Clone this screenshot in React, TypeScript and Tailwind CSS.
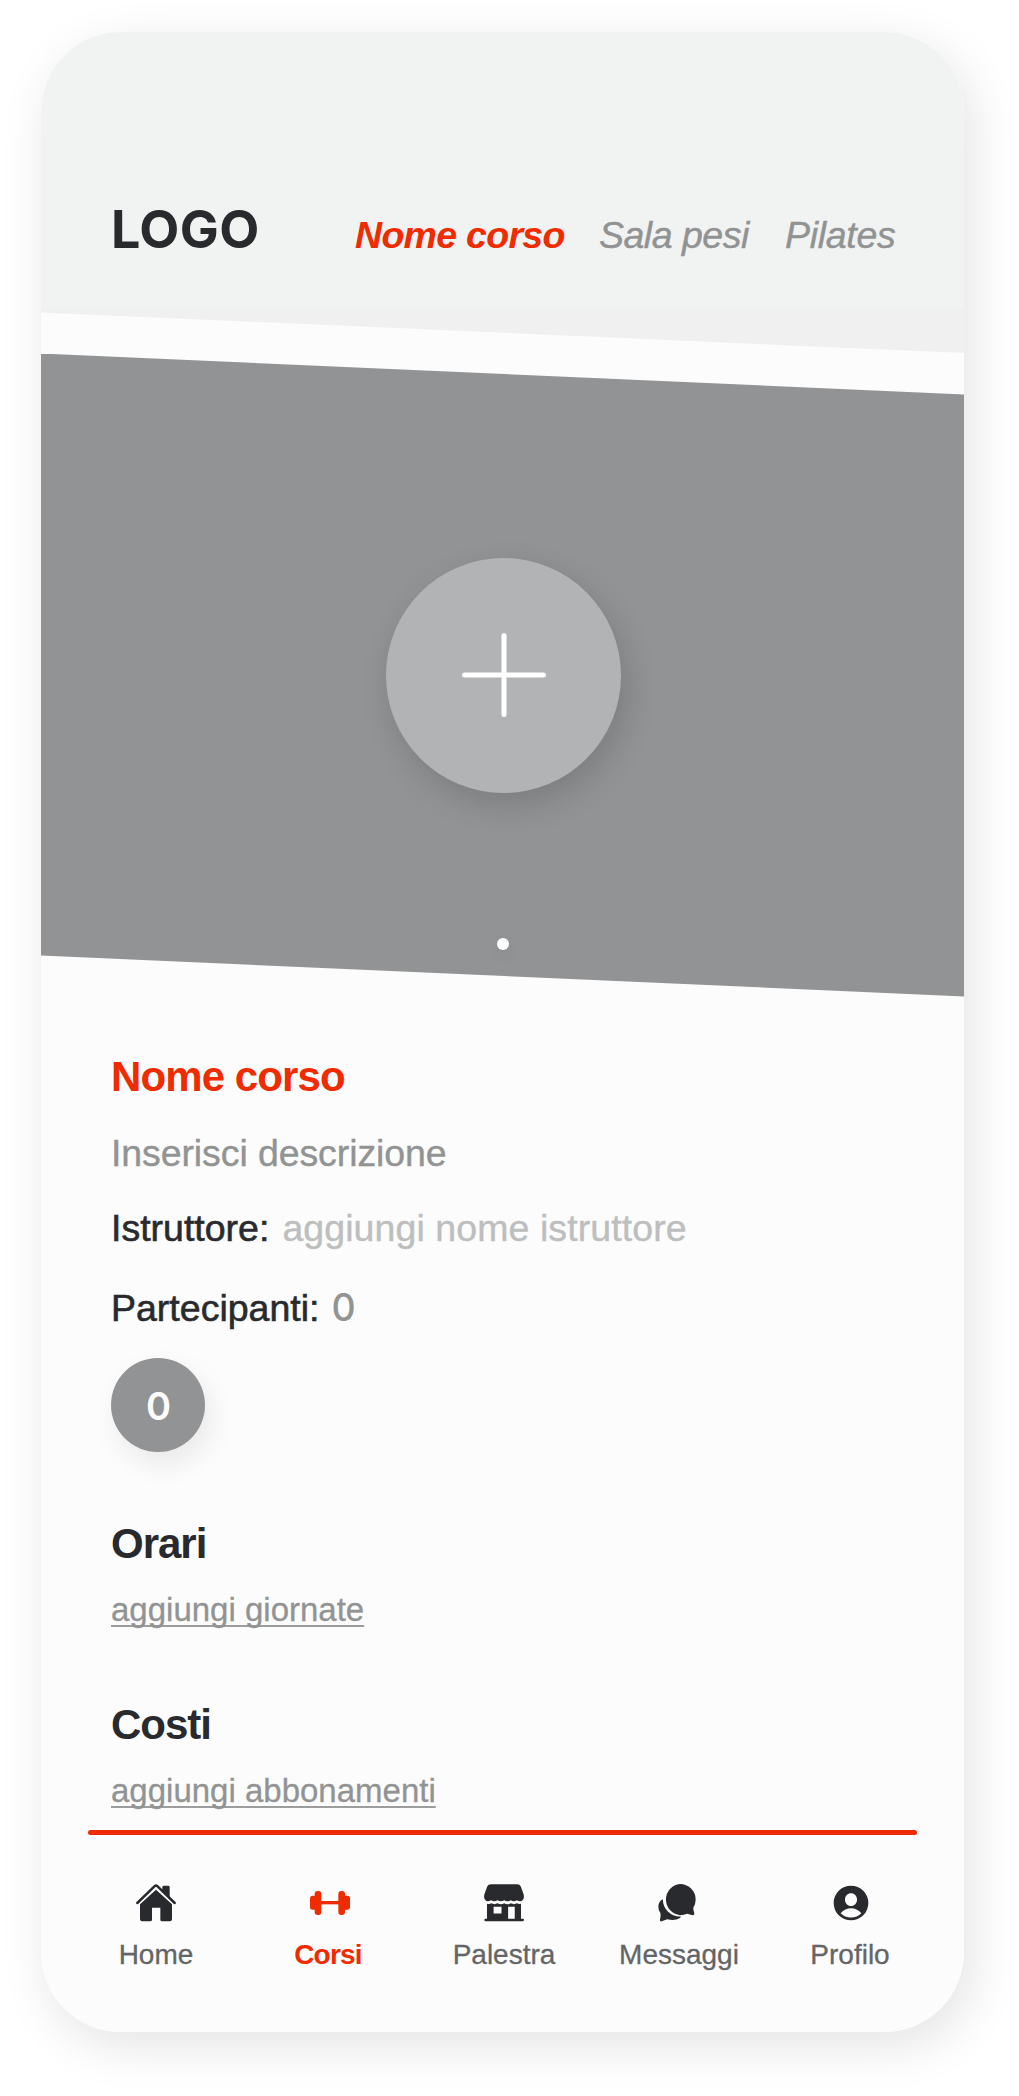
import React from "react";

type IconProps = { className?: string };

function HomeIcon({ className }: IconProps) {
  return (
    <svg viewBox="168 72 120 114" className={className} fill="currentColor">
      <path d="M247 81q0-4 4-4h14q4 0 4 4v32l-22-20z" />
      <path d="M172 129l52-50.500q4-3.500 8 0l52 50.500" fill="none" stroke="currentColor" strokeWidth="7.500" strokeLinecap="round" strokeLinejoin="round" />
      <path d="M228 89l48 44v45q0 6-6 6h-24q-5 0-5-5v-36h-25v36q0 5-5 5h-25q-6 0-6-6v-45z" />
    </svg>
  );
}

function DumbbellIcon({ className }: IconProps) {
  return (
    <svg viewBox="684 72 120 114" className={className} fill="currentColor" overflow="visible">
      <rect x="690" y="107" width="20" height="42" rx="8" />
      <rect x="704" y="93" width="20" height="72" rx="9" />
      <rect x="718" y="123" width="64" height="10" />
      <rect x="775" y="93" width="20" height="72" rx="9" />
      <rect x="790" y="107" width="20" height="42" rx="8" />
    </svg>
  );
}

function StoreIcon({ className }: IconProps) {
  return (
    <svg viewBox="190 72 121 114" className={className} fill="currentColor">
      <path d="M211 72h80q7 0 10 6l9 25q3 14-5 19-8 4-15-1-10 6-19 0-10 6-20 0-10 6-20 0-10 6-20 0-8 5-15 1-8-5-5-19l9-25q3-6 11-6z" />
      <path
        fillRule="evenodd"
        d="M199 131q7 2 13-1 9 5 19 0 10 6 20 0 10 6 20 0 10 5 19 0 6 3 12 1v46h6q3 0 3 3.500t-3 3.500h-114q-3 0-3-3.500t3-3.500h5zM219 140v21h24v-21zM263 140v37h20v-37z"
      />
    </svg>
  );
}

function ChatIcon({ className }: IconProps) {
  return (
    <svg viewBox="717 72 120 114" className={className} fill="currentColor" overflow="visible">
      <path d="M727 118q-12 9-12 22 0 11 6 19 2 5-1 20-1 6 5 5l17-6q22 6 38-4 5-4 1-6z" />
      <circle cx="780" cy="118" r="51.500" fill="#fcfcfc" />
      <path d="M780 72a47 46.500 0 0 1 47 46.500q0 13-7 25-1 4 3 16 1 6-5 6-8-1-17-4-9 4-21 4a47 47 0 0 1 0-93.500z" />
    </svg>
  );
}

function ProfileIcon({ className }: IconProps) {
  return (
    <svg viewBox="270 251 120 114" className={className} fill="currentColor">
      <path
        fillRule="evenodd"
        d="M333 256a52 52 0 1 1 0 104 52 52 0 1 1 0-104zM333 279c-10 0-18 8-18 19s8 19 18 19 18-8 18-19-8-19-18-19zM302 339c17-20 45-20 62 0-14 17-48 17-62 0z"
      />
    </svg>
  );
}

const tabs = [
  { label: "Home", Icon: HomeIcon, width: "w-[136px]", active: false },
  { label: "Corsi", Icon: DumbbellIcon, width: "w-[208px]", active: true },
  { label: "Palestra", Icon: StoreIcon, width: "w-[144px]", active: false },
  { label: "Messaggi", Icon: ChatIcon, width: "w-[206px]", active: false },
  { label: "Profilo", Icon: ProfileIcon, width: "w-[136px]", active: false },
];

function Header() {
  return (
    <header className="h-[321px] bg-[linear-gradient(#f1f3f2_276px,#f0f0f0_276px)] [clip-path:polygon(0_0,100%_0,100%_100%,0_280.500px)]">
      <div className="flex items-baseline pt-[172px] pl-[70px]">
        <div className="w-[244px] shrink-0 font-['Inter'] text-[52px] leading-[52px] font-bold tracking-[0.4px]">LOGO</div>
        <nav className="flex items-baseline text-[37.5px] leading-none whitespace-nowrap italic">
          <a className="w-[244px] font-bold tracking-[-0.700px] text-[#ef2b00]">Nome corso</a>
          <a className="w-[186px] tracking-[-0.500px] text-[#919292] [-webkit-text-stroke:0.400px]">Sala pesi</a>
          <a className="tracking-[-0.300px] text-[#919292] [-webkit-text-stroke:0.400px]">Pilates</a>
        </nav>
      </div>
    </header>
  );
}

function Hero() {
  return (
    <section className="mt-[0.5px] flex h-[643px] flex-col items-center bg-[#929394] pt-[204px] [clip-path:polygon(0_0,100%_41px,100%_100%,0_602px)]">
      <button className="ml-[2px] flex size-[235px] items-center justify-center rounded-full bg-[#b2b3b5] shadow-[6px_12px_32px_rgba(0,0,0,0.15)]">
        <svg viewBox="0 0 84 84" className="size-[84px]" stroke="white" strokeWidth="5" strokeLinecap="round">
          <path d="M42 2.500v79M2.500 42h79" />
        </svg>
      </button>
      <span className="mt-[145px] size-[12px] rounded-full bg-white shadow-[4px_8px_16px_rgba(0,0,0,0.060)]" />
    </section>
  );
}

function Section({ title, link, className }: { title: string; link: string; className: string }) {
  return (
    <section className={className}>
      <h2 className="text-[42px] leading-[42px] font-bold tracking-[-1px]">{title}</h2>
      <a className="mt-[28px] block w-fit text-[33px] leading-[33px] text-[#929393] underline decoration-[#9c9d9d] decoration-2 underline-offset-[4px] [-webkit-text-stroke:0.300px] [text-decoration-skip-ink:none]">
        {link}
      </a>
    </section>
  );
}

export default function App() {
  return (
    <div className="h-[2096px] w-[1019px] overflow-hidden bg-white pt-[32px] pl-[41px] font-['Liberation_Sans',Arial,sans-serif] text-[#292a2d]">
      <div className="h-[2000px] w-[923px] rounded-[80px] shadow-[8px_14px_50px_rgba(0,0,0,0.110)]">
        <div className="flex h-full flex-col overflow-hidden rounded-[80px] bg-[#fcfcfc]">
          <Header />
          <Hero />
          <main className="px-[70px] pt-[59px] whitespace-nowrap">
            <h1 className="text-[42px] leading-[42px] font-bold tracking-[-0.900px] text-[#ef2b00]">Nome corso</h1>
            <p className="mt-[36px] text-[37.5px] leading-[38px] tracking-[-0.100px] text-[#929393] [-webkit-text-stroke:0.400px]">
              Inserisci descrizione
            </p>
            <p className="mt-[37px] flex gap-[13px] text-[37.5px] leading-[38px]">
              <span className="[-webkit-text-stroke:0.600px]">Istruttore:</span>
              <span className="tracking-[0.080px] text-[#bdbebe] [-webkit-text-stroke:0.400px]">aggiungi nome istruttore</span>
            </p>
            <p className="mt-[42px] flex gap-[12px] text-[37.5px] leading-[38px]">
              <span className="[-webkit-text-stroke:0.600px]">Partecipanti:</span>
              <span className="font-['Inter'] font-medium text-[#929393]">0</span>
            </p>
            <div className="mt-[31px] flex size-[94px] items-center justify-center rounded-full bg-[#929394] pt-[2px] pl-px font-['Inter'] text-[38px] leading-none font-semibold text-[#fcfcfc] shadow-[6px_12px_28px_rgba(0,0,0,0.080)]">
              0
            </div>
            <Section className="mt-[71px]" title="Orari" link="aggiungi giornate" />
            <Section className="mt-[78px]" title="Costi" link="aggiungi abbonamenti" />
          </main>
          <footer className="mt-auto h-[202px] shrink-0 px-[47px]">
            <div className="h-[5px] rounded-full bg-[#ef2b00]" />
            <nav className="flex pt-[49px]">
              {tabs.map(({ label, Icon, width, active }) => (
                <a key={label} className={`flex shrink-0 flex-col items-center ${width}`}>
                  <Icon className={active ? "h-[38px] w-[40px] text-[#ef2b00]" : "h-[38px] w-[40px]"} />
                  <span
                    className={
                      active
                        ? "mt-[19px] text-[28px] leading-[28px] font-bold tracking-[-0.800px] text-[#ef2b00]"
                        : "mt-[19px] text-[28px] leading-[28px] text-[#646566] [-webkit-text-stroke:0.300px]"
                    }
                  >
                    {label}
                  </span>
                </a>
              ))}
            </nav>
          </footer>
        </div>
      </div>
    </div>
  );
}
